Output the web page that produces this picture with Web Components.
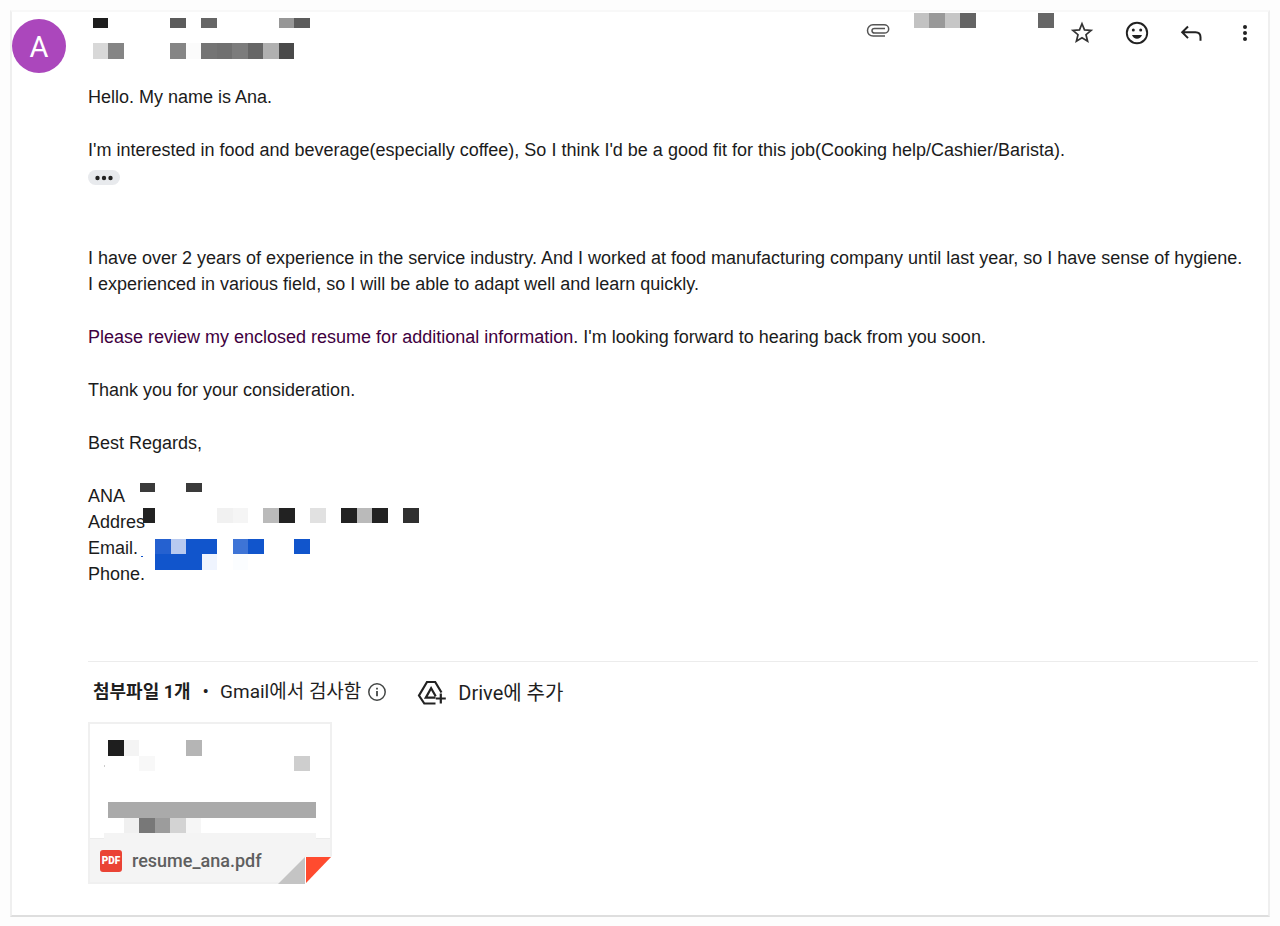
<!DOCTYPE html>
<html lang="ko">
<head>
<meta charset="utf-8">
<title>Mail</title>
<style>
body { margin: 10px; background: #fdfdfd; color: #1b1b1b; font: 18px/26px "Liberation Sans", Arial, sans-serif; }
p { margin: 0 0 27px; }
em { font-style: normal; color: #400040; }
</style>
</head>
<body>
<mail-card>
  <mail-header slot="header"></mail-header>
  <mail-body>
    <p>Hello. My name is Ana.</p>
    <p slot="intro">I'm interested in food and beverage(especially coffee), So I think I'd be a good fit for this job(Cooking help/Cashier/Barista).</p>
    <p slot="rest">I have over 2 years of experience in the service industry. And I worked at food manufacturing company until last year, so I have sense of hygiene.<br>I experienced in various field, so I will be able to adapt well and learn quickly.</p>
    <p slot="rest"><em>Please review my enclosed resume for additional information</em>. I'm looking forward to hearing back from you soon.</p>
    <p slot="rest">Thank you for your consideration.</p>
    <p slot="rest">Best Regards,</p>
    <mail-signature slot="rest"></mail-signature>
  </mail-body>
  <mail-attachments><attachment-tile>resume_ana.pdf</attachment-tile></mail-attachments>
</mail-card>

<script>
// Blocks of redacted content: each entry is "x y width height colour".
class PixelMosaic extends HTMLElement {
  connectedCallback() {
    const w = this.getAttribute('w'), h = this.getAttribute('h');
    const rects = this.getAttribute('cells').split(',').map(c => {
      const [x, y, cw, ch, f] = c.trim().split(/\s+/);
      return `<rect x="${x}" y="${y}" width="${cw}" height="${ch}" fill="${f}"/>`;
    }).join('');
    this.attachShadow({ mode: 'open' }).innerHTML =
      `<style>:host{display:block;flex:none}svg{display:block}</style>
       <svg width="${w}" height="${h}" viewBox="0 0 ${w} ${h}" shape-rendering="crispEdges" aria-hidden="true">${rects}</svg>`;
  }
}
customElements.define('pixel-mosaic', PixelMosaic);

const define = (name, html) => customElements.define(name, class extends HTMLElement {
  constructor() {
    super();
    const t = document.createElement('template');
    t.innerHTML = html;
    this.attachShadow({ mode: 'open' }).append(t.content.cloneNode(true));
  }
});

define('mail-card', `
<style>
:host { display: block; }
.card { background: #fff; border: 2px solid; border-color: #f8f8f8 #efefef #dedede; box-shadow: 0 1px 4px #e4e4e4; padding-bottom: 31px; }
.content { padding: 0 10px 0 76px; }
</style>
<div class="card">
<slot name="header"></slot>
<div class="content"><slot></slot></div>
</div>`);

define('icon-button', `
<style>
:host { display: block; }
button { display: flex; align-items: center; justify-content: center; width: 28px; height: 28px; padding: 0; border: 0; background: none; color: #222; cursor: pointer; }
</style>
<button type="button"><slot></slot></button>`);

define('mail-header', `
<style>
:host { display: flex; align-items: flex-start; height: 72px; }
.avatar { width: 54px; height: 54px; margin: 7px 22px 0 0; border-radius: 50%; background: #ab47bc; color: #fff; font: 29px/56px Roboto, sans-serif; text-align: center; flex: none; }
.space { flex: 1; }
.clip { display: block; margin: 10px 24px 0 0; }
.actions { display: flex; gap: 26px; margin: 7px 9px 0 15px; }
svg { display: block; flex: none; }
</style>
<div class="avatar">A</div>
<pixel-mosaic w="230" h="60" cells="5 6 15 10 #1e1e1e, 82 6 16 10 #5c5c5c, 113 6 16 10 #666, 191 6 15 10 #979797, 206 6 16 10 #5c5c5c, 5 31 15 16 #d8d8d8, 20 31 16 16 #858585, 82 31 16 16 #858585, 98 31 15 16 #fbfbfb, 113 31 16 16 #747474, 129 31 15 16 #707070, 144 31 16 16 #7c7c7c, 160 31 15 16 #666, 175 31 16 16 #b0b0b0, 191 31 15 16 #4a4a4a"></pixel-mosaic>
<div class="space"></div>
<svg class="clip" width="24" height="16" viewBox="0 0 24 16" fill="none" stroke="#555" stroke-width="1.5"><path d="M19 14H7.200C3.700 14 1.500 11.600 1.500 8.500S4 2.800 7 2.800h11c2.700 0 4.700 1.700 4.700 4.100S20.700 11 18.300 11H8.500C6.900 11 6 10 6 8.700s1-2.200 2.500-2.200H19"/></svg>
<pixel-mosaic w="140" h="16" cells="0 1 15 15 #c2c2c2, 15 1 16 15 #999, 31 1 15 15 #c6c6c6, 46 1 16 15 #646464, 124 1 16 15 #666"></pixel-mosaic>
<div class="actions">
  <icon-button aria-label="Star"><svg width="26" height="26" viewBox="0 0 26 26" fill="none" stroke="#333" stroke-width="1.700"><path d="M12 3.800l2.500 6.100 6.600.5-5.100 4.300 1.600 6.500-5.600-3.500-5.600 3.500L8 14.700l-5.100-4.300 6.600-.5z"/></svg></icon-button>
  <icon-button aria-label="React"><svg width="26" height="26" viewBox="0 0 26 26" fill="none" stroke="#222" stroke-width="1.900"><circle cx="13" cy="13" r="10.200"/><circle cx="9.300" cy="10" r="1.500" fill="#222" stroke="none"/><circle cx="16.700" cy="10" r="1.500" fill="#222" stroke="none"/><path d="M8 15h10c-.8 2.300-2.700 3.700-5 3.700S8.800 17.300 8 15z" fill="#222" stroke="none"/></svg></icon-button>
  <icon-button aria-label="Reply"><svg width="26" height="26" viewBox="0 0 26 26" fill="none" stroke="#222" stroke-width="2"><path d="M10 6.500L4.200 12.300l5.800 5.800M4.200 12.300H17.500c3 0 5 2 5 5v3.400"/></svg></icon-button>
  <icon-button aria-label="More"><svg width="26" height="26" viewBox="0 0 26 26" fill="#222"><circle cx="13" cy="7" r="2"/><circle cx="13" cy="13" r="2"/><circle cx="13" cy="19" r="2"/></svg></icon-button>
</div>`);

define('mail-body', `
<style>
:host { display: block; padding-bottom: 74px; border-bottom: 1px solid #ececec; }
::slotted([slot=intro]) { margin-bottom: 7px !important; }
button { display: flex; align-items: center; justify-content: center; width: 32px; height: 15px; margin: 0 0 60px; padding: 0; border: 0; border-radius: 8px; background: #e8eaed; }
</style>
<slot></slot>
<slot name="intro"></slot>
<button type="button" aria-label="Show trimmed content"><svg width="20" height="6" viewBox="0 0 20 6" fill="#222"><circle cx="3.500" cy="3" r="2.200"/><circle cx="10" cy="3" r="2.200"/><circle cx="16.500" cy="3" r="2.200"/></svg></button>
<slot name="rest"></slot>`);

define('mail-signature', `
<style>
:host { display: grid; position: relative; }
pixel-mosaic { position: absolute; left: 50px; top: 0; }
</style>
<div>ANA</div><div>Addres</div><div>Email.</div><div>Phone.</div>
<pixel-mosaic w="290" h="94" cells="2 0 15 9 #3a3a3a, 48 0 16 9 #3a3a3a, 5 25 12 15 #222, 79 25 16 15 #f1f1f1, 95 25 15 15 #f5f5f5, 125 25 16 15 #bababa, 141 25 16 15 #222, 172 25 16 15 #e1e1e1, 203 25 16 15 #222, 219 25 15 15 #bababa, 234 25 16 15 #222, 265 25 16 15 #303030, 3 73 2 1 #1155cc, 17 56 16 15 #2561d0, 33 56 15 15 #b8caf0, 48 56 31 15 #1155cc, 17 71 47 16 #1155cc, 64 71 15 16 #eff4fe, 95 56 15 15 #3e74d6, 110 56 16 15 #1155cc, 95 71 15 16 #fbfdff, 156 56 16 15 #1155cc"></pixel-mosaic>`);

define('mail-attachments', `
<style>
:host { display: block; }
.bar { display: flex; align-items: center; height: 60px; padding-left: 5px; font: 19px/26px Roboto, "Noto Sans CJK KR", sans-serif; color: #1f1f1f; }
svg { display: block; flex: none; }
b { font-size: 18px; }
.dot { margin: 0 11px 0 12px; }
.info { margin: 0 30px 0 6px; }
button { display: flex; align-items: center; gap: 11px; padding: 2px 0 0; border: 0; background: none; color: inherit; font: inherit; font-size: 20px; }
</style>
<div class="bar"><b>첨부파일 1개</b><span class="dot">•</span><span>Gmail에서 검사함</span>
<svg class="info" width="20" height="20" viewBox="0 0 20 20" fill="none" stroke="#444746" stroke-width="1.500"><circle cx="10" cy="10" r="8.200"/><path d="M10 9v5.200M10 5.700v1.900" stroke-width="1.800"/></svg>
<button type="button"><svg width="30" height="28" viewBox="0 0 30 28" fill="none" stroke="#222" stroke-width="2.200"><path d="M18.500 24.500H7.300L2 16.500 10 3h8.200l6.300 10.500"/><path d="M18.500 18.700H8.800l5.300-9.400 4.600 8"/><path d="M23.800 14.500v10M18.800 19.500h10"/></svg><span>Drive에 추가</span></button></div>
<slot></slot>`);

define('attachment-tile', `
<style>
:host { display: block; position: relative; box-sizing: border-box; width: 244px; border: 2px solid #f0f0f0; background: #fff; }
a { display: flex; align-items: center; gap: 10px; height: 43px; padding-left: 10px; background: #f4f4f4; color: #5f5f5f; font: 500 18px/24px Roboto, sans-serif; text-decoration: none; }
svg { display: block; flex: none; }
.fold { position: absolute; right: -2px; bottom: -2px; }
.badge { width: 22px; height: 22px; border-radius: 3px; background: #ea4335; color: #fff; font: 900 10px/22px Roboto, sans-serif; text-align: center; }
</style>
<pixel-mosaic w="240" h="115" cells="18 16 16 16 #1e1e1e, 34 16 15 16 #f4f4f4, 96 16 16 16 #b5b5b5, 49 32 16 15 #f8f8f8, 204 32 16 15 #cecece, 14 41 1 2 #ccc, 18 78 208 16 #aaa, 34 94 15 15 #f0f0f0, 49 94 16 15 #787878, 65 94 15 15 #9c9c9c, 80 94 16 15 #d3d3d3, 96 94 15 15 #f6f6f6, 14 109 212 6 #f4f4f4, 0 114 14 1 #ececec, 226 114 14 1 #ececec"></pixel-mosaic>
<a href="#"><span class="badge">PDF</span><span><slot></slot></span></a>
<svg class="fold" width="54" height="28" viewBox="0 0 54 28"><path d="M27 28L54 0v28z" fill="#fff"/><path d="M0 28L27 1v27z" fill="#c4c4c4"/><path d="M27 1h1v27h-1z" fill="#fff"/><path d="M28 1h25L28 27z" fill="#ff4b2f"/></svg>`);
</script>
</body>
</html>
